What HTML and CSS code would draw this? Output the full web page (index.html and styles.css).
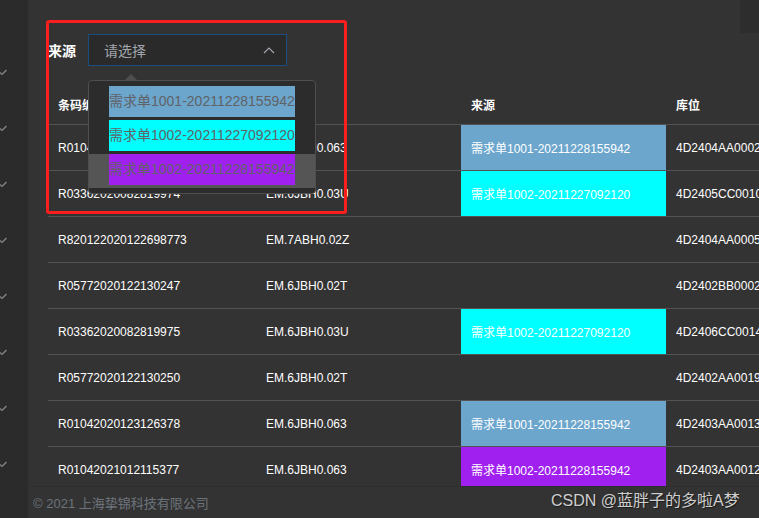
FILE: index.html
```html
<!DOCTYPE html>
<html lang="zh">
<head>
<meta charset="utf-8">
<link rel="stylesheet" href="styles.css">
</head>
<body>
<div class="app">
  <aside class="sidebar">
    <div class="menu-item"><svg class="chev" width="10" height="7" viewBox="0 0 10 7"><polyline points="0.5,1 5,5.5 9.5,1"/></svg></div>
    <div class="menu-item"><svg class="chev" width="10" height="7" viewBox="0 0 10 7"><polyline points="0.5,1 5,5.5 9.5,1"/></svg></div>
    <div class="menu-item"><svg class="chev" width="10" height="7" viewBox="0 0 10 7"><polyline points="0.5,1 5,5.5 9.5,1"/></svg></div>
    <div class="menu-item"><svg class="chev" width="10" height="7" viewBox="0 0 10 7"><polyline points="0.5,1 5,5.5 9.5,1"/></svg></div>
    <div class="menu-item"><svg class="chev" width="10" height="7" viewBox="0 0 10 7"><polyline points="0.5,1 5,5.5 9.5,1"/></svg></div>
    <div class="menu-item"><svg class="chev" width="10" height="7" viewBox="0 0 10 7"><polyline points="0.5,1 5,5.5 9.5,1"/></svg></div>
    <div class="menu-item"><svg class="chev" width="10" height="7" viewBox="0 0 10 7"><polyline points="0.5,1 5,5.5 9.5,1"/></svg></div>
    <div class="menu-item"><svg class="chev" width="10" height="7" viewBox="0 0 10 7"><polyline points="0.5,1 5,5.5 9.5,1"/></svg></div>
  </aside>
  <main class="main">
    <div class="topbar"><div class="top-block"></div></div>
    <div class="form-row">
      <label class="form-label">来源</label>
      <div class="select">
        <span class="placeholder">请选择</span>
        <svg class="select-arrow" width="12" height="8" viewBox="0 0 12 8"><polyline points="1,7 6,2 11,7"/></svg>
      </div>
    </div>
    <div class="table-wrap">
      <table class="grid">
        <colgroup>
          <col class="c1"><col class="c2"><col class="c3"><col class="c4">
        </colgroup>
        <thead>
          <tr><th>条码编号</th><th>物料编码</th><th>来源</th><th>库位</th></tr>
        </thead>
        <tbody>
          <tr><td>R01042020123126377</td><td>EM.6JBH0.063</td><td class="src-blue">需求单1001-20211228155942</td><td>4D2404AA0002</td></tr>
          <tr><td>R03362020082819974</td><td>EM.6JBH0.03U</td><td class="src-cyan">需求单1002-20211227092120</td><td>4D2405CC0010</td></tr>
          <tr><td>R820122020122698773</td><td>EM.7ABH0.02Z</td><td></td><td>4D2404AA0005</td></tr>
          <tr><td>R05772020122130247</td><td>EM.6JBH0.02T</td><td></td><td>4D2402BB0002</td></tr>
          <tr><td>R03362020082819975</td><td>EM.6JBH0.03U</td><td class="src-cyan">需求单1002-20211227092120</td><td>4D2406CC0014</td></tr>
          <tr><td>R05772020122130250</td><td>EM.6JBH0.02T</td><td></td><td>4D2402AA0019</td></tr>
          <tr><td>R01042020123126378</td><td>EM.6JBH0.063</td><td class="src-blue">需求单1001-20211228155942</td><td>4D2403AA0013</td></tr>
          <tr><td>R01042021012115377</td><td>EM.6JBH0.063</td><td class="src-purple">需求单1002-20211228155942</td><td>4D2403AA0012</td></tr>
        </tbody>
      </table>
    </div>
    <footer class="footer">© 2021 上海挚锦科技有限公司</footer>
  </main>

  <div class="dropdown">
    <span class="dropdown-caret"></span>
    <ul class="options">
      <li class="option"><span class="opt-label src-blue">需求单1001-20211228155942</span></li>
      <li class="option"><span class="opt-label src-cyan">需求单1002-20211227092120</span></li>
      <li class="option hover"><span class="opt-label src-purple">需求单1002-20211228155942</span></li>
    </ul>
  </div>

  <div class="annot"></div>
  <div class="watermark">CSDN @蓝胖子的多啦A梦</div>
</div>
</body>
</html>
```

FILE: styles.css
```css
* { box-sizing: border-box; }
html, body {
  margin: 0;
  padding: 0;
  width: 759px;
  height: 518px;
  overflow: hidden;
  background: #333333;
  font-family: "Liberation Sans", Arial, "Noto Sans CJK SC", sans-serif;
  color: #ffffff;
}
.app {
  position: relative;
  display: flex;
  width: 759px;
  height: 518px;
}
.sidebar {
  width: 28px;
  flex: none;
  background: #2b2b2b;
  padding-top: 44px;
  overflow: hidden;
}
.menu-item {
  height: 56px;
  display: flex;
  align-items: center;
}
.chev {
  margin-left: -3px;
  fill: none;
  stroke: #8c8c8c;
  stroke-width: 1.1;
}
.main {
  flex: 1;
  min-width: 0;
  display: flex;
  flex-direction: column;
  height: 518px;
}
.topbar {
  height: 34px;
  flex: none;
  display: flex;
  justify-content: flex-end;
}
.top-block {
  width: 19px;
  height: 33px;
  background: #2d2d2d;
}
.form-row {
  height: 32px;
  flex: none;
  display: flex;
  align-items: center;
  padding-left: 20px;
}
.form-label {
  font-size: 14px;
  font-weight: bold;
  width: 40px;
  color: #ffffff;
}
.select {
  width: 199px;
  height: 32px;
  border: 1px solid #1c4d7d;
  background: #2a2a2a;
  display: flex;
  align-items: center;
  justify-content: space-between;
  padding: 0 11px 0 15px;
}
.placeholder {
  font-size: 14px;
  color: #a3a6ad;
}
.select-arrow {
  fill: none;
  stroke: #a3a6ad;
  stroke-width: 1.2;
}
.table-wrap {
  flex: 1;
  min-height: 0;
  overflow: hidden;
  margin-top: 18px;
  padding-left: 20px;
}
.grid {
  border-collapse: separate;
  border-spacing: 0;
  table-layout: fixed;
  width: 823px;
  font-size: 12px;
}
.c1 { width: 208px; }
.c2 { width: 205px; }
.c3 { width: 205px; }
.c4 { width: 205px; }
.grid th {
  height: 41px;
  padding: 0 10px;
  text-align: left;
  font-weight: bold;
  font-size: 12px;
  color: #ffffff;
  border-bottom: 1px solid #535353;
  white-space: nowrap;
  overflow: hidden;
}
.grid td {
  height: 46px;
  padding: 0 10px;
  color: #ffffff;
  border-bottom: 1px solid #535353;
  white-space: nowrap;
  overflow: hidden;
}
.src-blue { background: #6ca6cd; }
.src-cyan { background: #00ffff; }
.src-purple { background: #a020f0; }
.footer {
  height: 32px;
  flex: none;
  border-top: 1px solid #2f2f2f;
  padding-left: 5px;
  display: flex;
  align-items: center;
  font-size: 13px;
  color: #6d737c;
}
.dropdown {
  position: absolute;
  left: 88px;
  top: 80px;
  width: 228px;
  height: 114px;
  border: 1px solid #4f4f4f;
  border-radius: 4px;
  background: #2c2c2c;
}
.dropdown-caret {
  position: absolute;
  left: 36px;
  top: -7px;
  width: 0;
  height: 0;
  border-left: 6px solid transparent;
  border-right: 6px solid transparent;
  border-bottom: 6px solid #4f4f4f;
}
.options {
  list-style: none;
  margin: 0;
  padding: 5px 0;
}
.option {
  height: 34px;
  padding: 0 20px;
}
.option.hover { background: #555555; }
.opt-label {
  display: inline-block;
  height: 31px;
  line-height: 31px;
  font-size: 14px;
  color: #606266;
  vertical-align: top;
}
.annot {
  position: absolute;
  left: 46px;
  top: 20px;
  width: 301px;
  height: 194px;
  border: 3px solid #fa1e1e;
  border-radius: 3px;
}
.watermark {
  position: absolute;
  left: 551px;
  top: 487px;
  font-size: 16px;
  color: #cfcfcf;
  text-shadow: 1px 1px 1px #1a1a1a;
}
```
